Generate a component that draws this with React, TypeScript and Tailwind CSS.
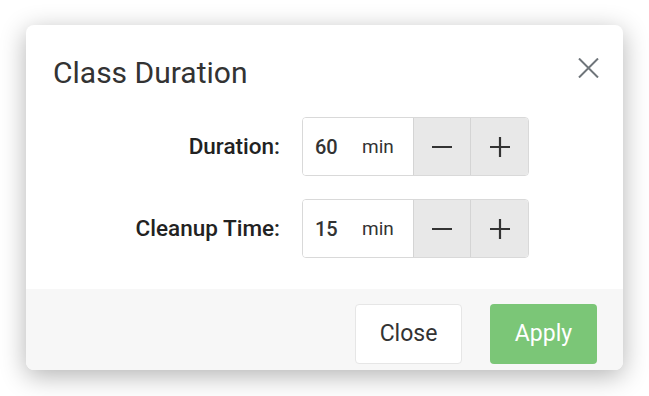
function Stepper({ value }: { value: number }) {
  return (
    <div className="flex h-[59px] w-[227px] overflow-hidden rounded-[4px] border border-[#d9d9d9]">
      <div className="flex w-[110px] items-center bg-white pl-[12px] leading-none text-[#333]">
        <span className="w-[47px] text-[20px] font-medium">{value}</span>
        <span className="text-[19px]">min</span>
      </div>
      <button className="flex w-[57px] items-center justify-center border-l border-[#d4d4d4] bg-[#e8e8e8] text-[#333]">
        <svg width="20" height="20" viewBox="0 0 20 20">
          <path d="M0 10h20" stroke="currentColor" strokeWidth="2.2" />
        </svg>
      </button>
      <button className="flex flex-1 items-center justify-center border-l border-[#d4d4d4] bg-[#e8e8e8] text-[#333]">
        <svg width="20" height="20" viewBox="0 0 20 20">
          <path d="M0 10h20M10 0v20" stroke="currentColor" strokeWidth="2.2" />
        </svg>
      </button>
    </div>
  );
}

export default function App() {
  const rows = [
    { label: "Duration:", value: 60 },
    { label: "Cleanup Time:", value: 15 },
  ];

  return (
    <div
      className="h-[396px] w-[649px] bg-white pl-[26px] pt-[25px]"
      style={{ fontFamily: "Roboto, 'Liberation Sans', sans-serif" }}
    >
      <div className="flex h-[345px] w-[597px] flex-col overflow-hidden rounded-[8px] bg-white shadow-[0_6px_26px_rgba(0,0,0,0.3)]">
        <div className="relative h-[92px] pl-[27px] pt-[33px]">
          <h2 className="text-[30px] leading-none text-[#333]">Class Duration</h2>
          <button className="absolute right-[24px] top-[33px] text-[#6f757a]">
            <svg width="21" height="20" viewBox="0 0 21 20">
              <path d="M1 0.5l19 19M20 0.5l-19 19" stroke="currentColor" strokeWidth="2" />
            </svg>
          </button>
        </div>

        <div className="flex flex-col gap-[23px]">
          {rows.map((r) => (
            <div key={r.label} className="flex items-center">
              <div className="w-[254px] text-right text-[22.5px] font-medium leading-none text-[#222]">{r.label}</div>
              <div className="ml-[22px]">
                <Stepper value={r.value} />
              </div>
            </div>
          ))}
        </div>

        <div className="mt-auto flex h-[81px] items-start justify-end gap-[28px] bg-[#f7f7f7] pr-[26px] pt-[15px]">
          <button className="h-[60px] w-[107px] rounded-[4px] border border-[#e6e6e6] bg-white text-[23px] text-[#333]">
            Close
          </button>
          <button className="h-[60px] w-[107px] rounded-[4px] bg-[#7bc677] text-[23px] text-white">Apply</button>
        </div>
      </div>
    </div>
  );
}
